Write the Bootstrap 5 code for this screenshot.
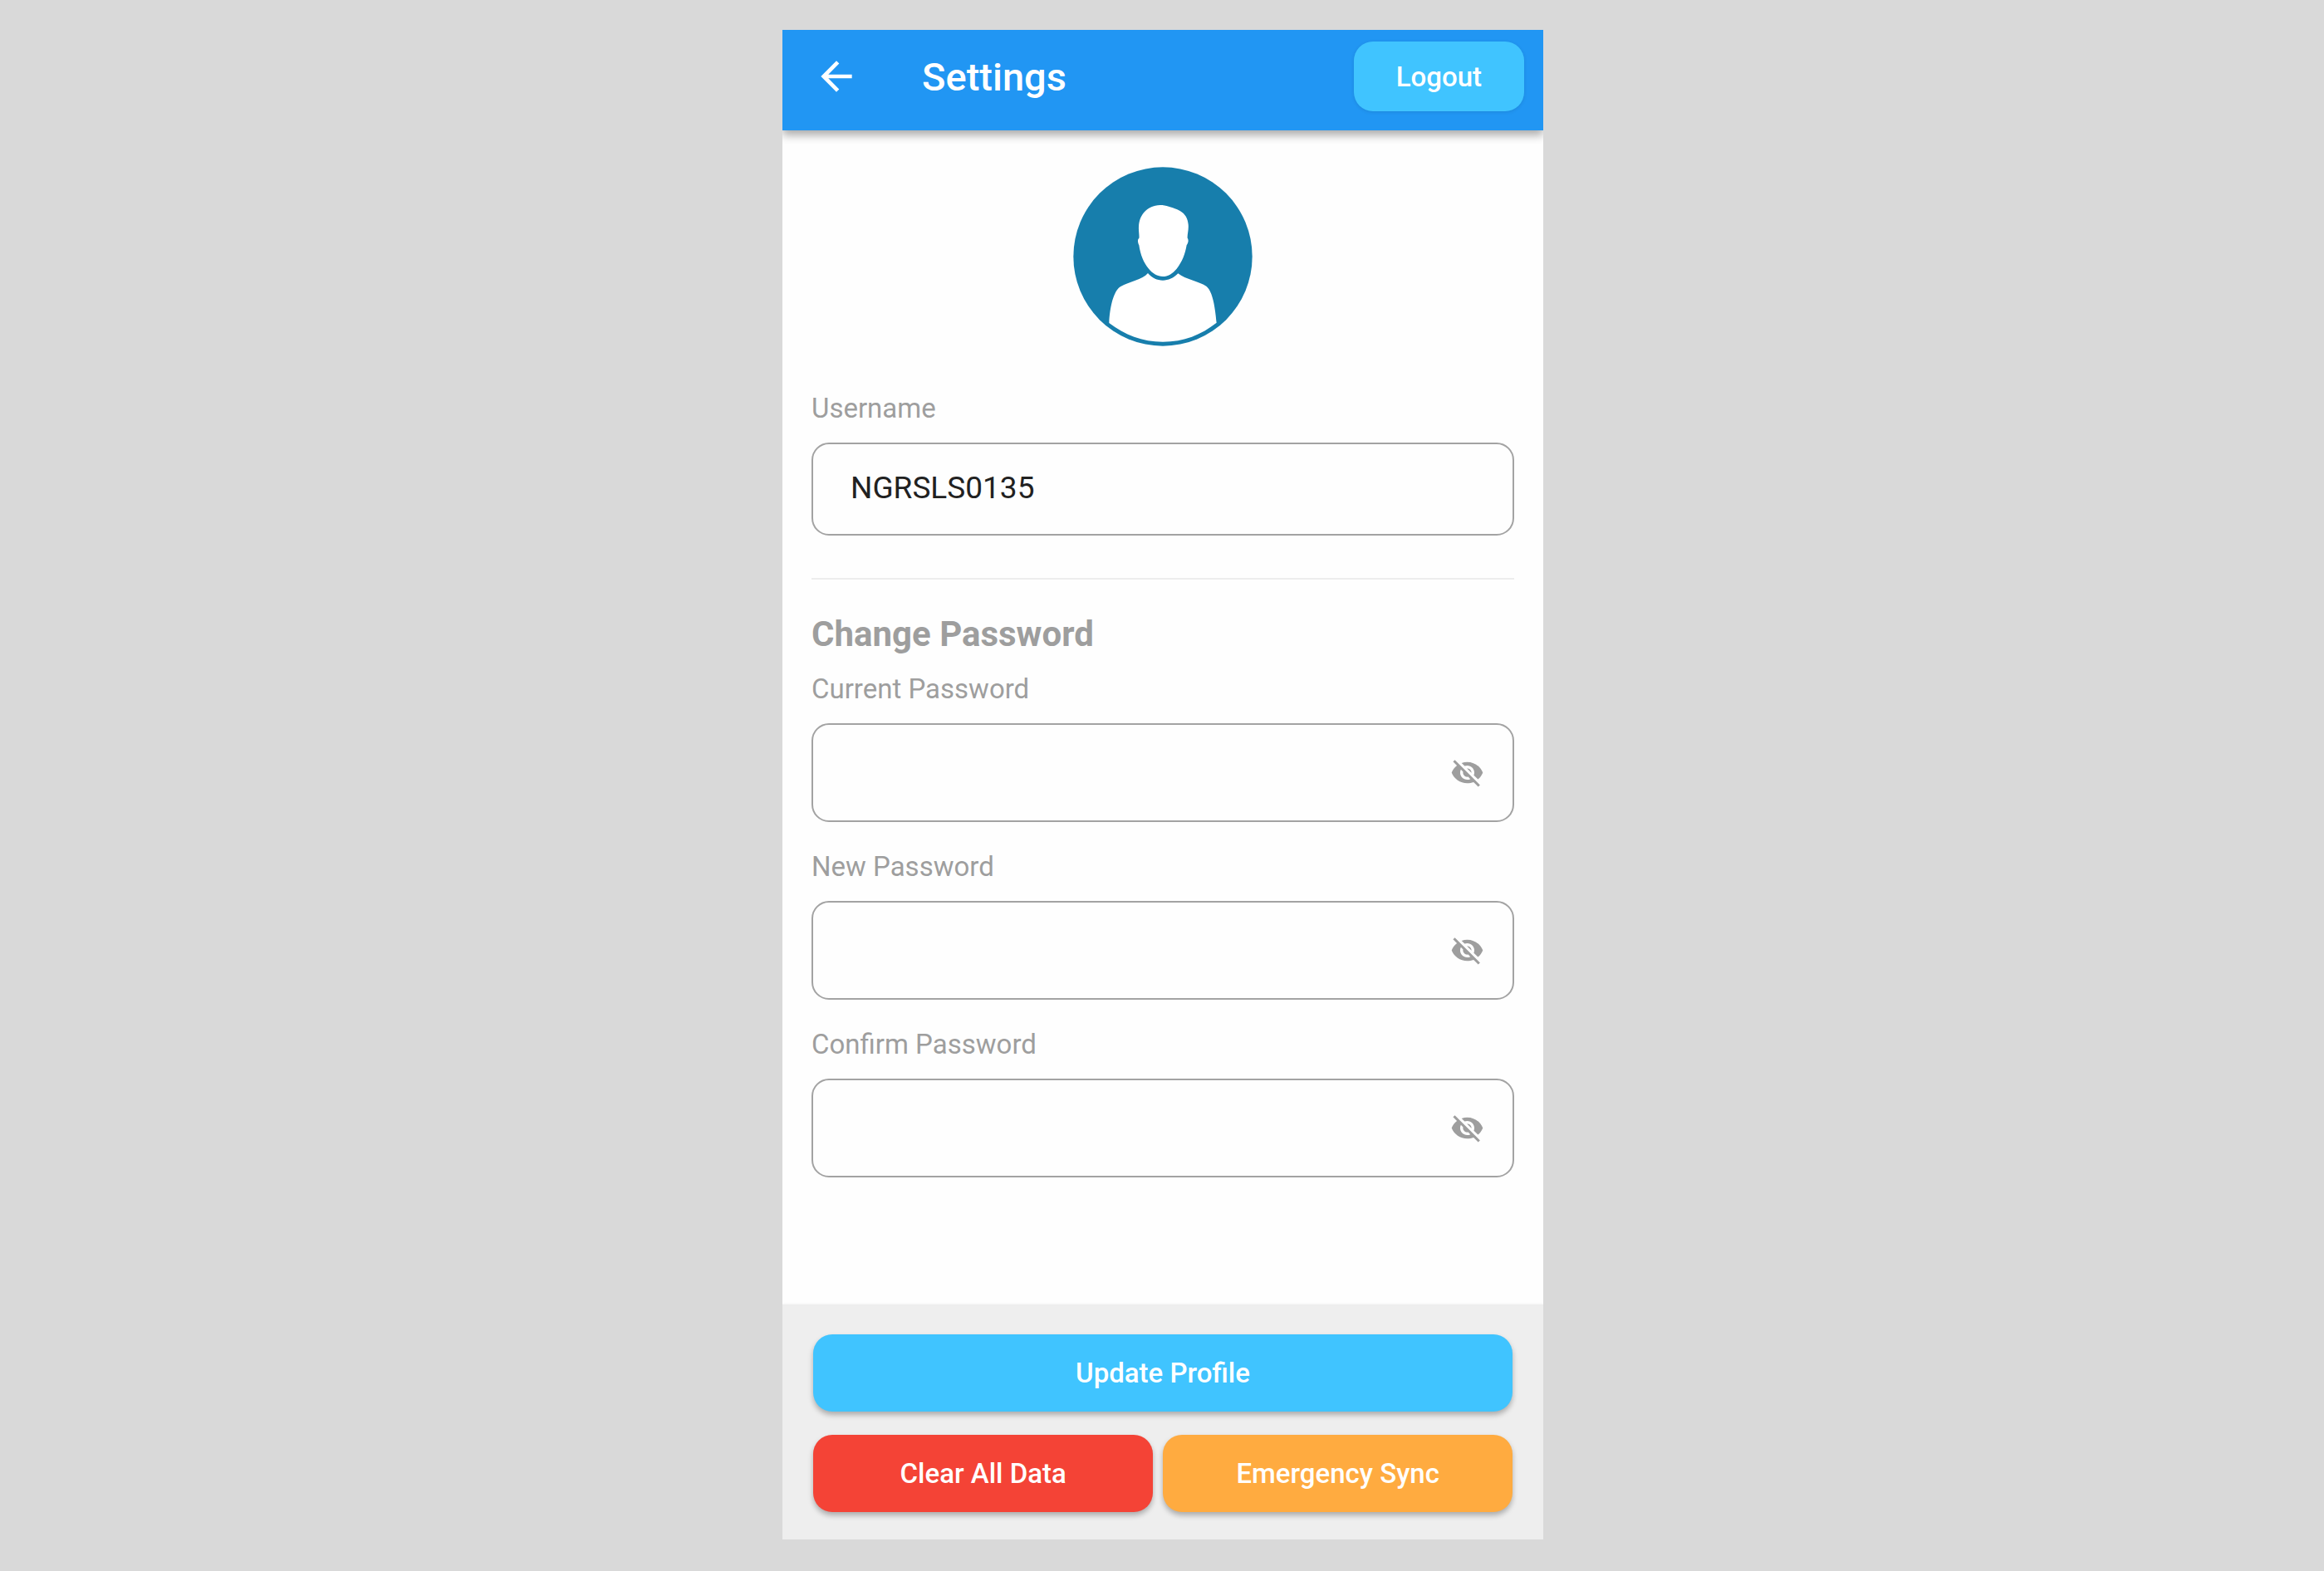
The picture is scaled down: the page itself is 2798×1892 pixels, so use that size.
<!DOCTYPE html>
<html lang="en">
<head>
<meta charset="utf-8">
<meta name="viewport" content="width=device-width, initial-scale=1">
<title>Settings</title>
<link href="https://cdn.jsdelivr.net/npm/bootstrap@5.3.0/dist/css/bootstrap.min.css" rel="stylesheet">
<style>
  body { background: #d9d9d9; font-family: Roboto, "Noto Sans", sans-serif; padding: 36px 36px 38px 38px; }
  .app-shell { width: 100%; max-width: 916px; background: #fefefe; }
  .app-header { background: #2196f3; padding: 14px 23px 23px 37px; box-shadow: 0 6px 10px rgba(0,0,0,.32); z-index: 1; }
  .app-title { font-size: 47px; line-height: 56px; font-weight: 500; margin-left: 75px; padding-top: 2px; }
  .icon-back { width: 56px; height: 56px; }
  .app-btn { --bs-btn-color: #fff; --bs-btn-hover-color: #fff; --bs-btn-active-color: #fff;
    border: 0; border-radius: 23px; font-size: 33px; line-height: 40px; font-weight: 500; }
  .btn-sky { background: #40c4ff; }
  .btn-clear { background: #f44336; flex: 34 1 0; }
  .btn-sync { background: #ffab40; flex: 35 1 0; }
  .btn-sky:hover { background: #2fb8f6; }
  .btn-clear:hover { background: #e53a2e; }
  .btn-sync:hover { background: #f79f2e; }
  .btn-logout { padding: 23px 51px 21px; box-shadow: 0 1px 4px rgba(0,0,0,.1); }
  .app-content { padding: 44px 35px; }
  .user-avatar { width: 216px; height: 216px; margin-bottom: 55px; }
  .field-label { font-size: 33px; line-height: 40px; color: #9e9e9e; margin-bottom: 21px; }
  .field-box { border: 2px solid #a3a3a3; border-radius: 21px; height: 119px; margin-bottom: 34px; }
  .field-box.user-box { height: 112px; margin-bottom: 51px; }
  .field-box:focus-within { border-color: #2196f3; }
  .field-box input { font-size: 37px; line-height: 44px; color: #212121; padding: 0 45px 4px; background: none; }
  .field-box input:focus { box-shadow: none; background: none; }
  .eye-toggle { color: #9e9e9e; margin-right: 34px; }
  .eye-toggle svg { width: 41px; height: 41px; }
  .section-rule { border-top: 2px solid #bbb; margin: 0 0 42px; }
  .section-title { font-size: 42px; line-height: 48px; font-weight: 700; color: #9e9e9e; margin-bottom: 22px; }
  .app-footer { background: #eee; padding: 36px 37px 33px; gap: 28px; box-shadow: 0 0 3px rgba(0,0,0,.08); }
  .app-footer .app-btn { padding: 27px 12px 26px; box-shadow: 0 4px 6px rgba(0,0,0,.28); }
  .action-row { gap: 12px; }
</style>
<script src="https://cdn.jsdelivr.net/npm/bootstrap@5.3.0/dist/js/bootstrap.bundle.min.js"></script>
</head>
<body class="min-vh-100 d-flex justify-content-center">
<svg class="d-none" aria-hidden="true">
  <symbol id="eye-off" viewBox="0 0 24 24"><path fill="currentColor" d="M12 7c2.760 0 5 2.240 5 5 0 .65-.13 1.260-.36 1.830l2.920 2.920c1.510-1.260 2.700-2.890 3.430-4.750-1.730-4.390-6-7.500-11-7.500-1.400 0-2.740.25-3.980.7l2.160 2.160C10.740 7.130 11.350 7 12 7zM2 4.270l2.280 2.280.46.46C3.080 8.300 1.780 10.020 1 12c1.730 4.390 6 7.500 11 7.500 1.550 0 3.030-.3 4.380-.84l.42.42L19.730 22 21 20.730 3.270 3 2 4.270zM7.530 9.800l1.550 1.550c-.05.21-.08.43-.08.65 0 1.660 1.340 3 3 3 .22 0 .44-.03.65-.08l1.550 1.550c-.67.33-1.410.53-2.200.53-2.760 0-5-2.240-5-5 0-.79.2-1.530.53-2.200zm4.310-.78l3.150 3.150.02-.16c0-1.660-1.340-3-3-3l-.17.01z"/></symbol>
</svg>
<div class="app-shell d-flex flex-column overflow-hidden">
  <header class="app-header d-flex align-items-center text-white position-relative">
    <button type="button" class="btn border-0 p-0 text-white d-flex" aria-label="Back">
      <svg class="icon-back" viewBox="0 0 24 24" fill="currentColor" aria-hidden="true"><path d="M20 11H7.830l5.590-5.590L12 4l-8 8 8 8 1.410-1.410L7.830 13H20v-2z"/></svg>
    </button>
    <h1 class="app-title mb-0">Settings</h1>
    <button type="button" class="btn app-btn btn-sky btn-logout ms-auto">Logout</button>
  </header>

  <main class="app-content flex-grow-1">
    <svg class="user-avatar d-block mx-auto" viewBox="64 62 648 648" role="img" aria-label="Profile picture">
      <circle cx="388" cy="386" r="323" fill="#177eac"/>
      <path fill="#fff" d="M378 200C335 201 302 233 301 278C300 296 304 309 302 320C296 323 297 334 302 345C307 380 319 408 336 429C351 448 369 458 388 458C406 458 423 448 438 430C458 405 469 376 474 345C480 336 482 325 477 319C476 305 482 289 480 270C478 245 466 227 440 216C418 208 401 200 378 200Z"/>
      <path fill="#fff" d="M334 446C315 469 265 478 236 494C210 509 196 570 194 626C250 669 314 694 388 694C464 694 527 668 582 625C577 573 569 514 546 494C520 476 470 469 443 447C426 464 408 472 388 472C367 472 349 463 334 446Z"/>
    </svg>

    <form id="profile-form">
      <label class="field-label d-block" for="username">Username</label>
      <div class="field-box user-box d-flex align-items-center">
        <input class="form-control border-0 h-100" type="text" id="username" value="NGRSLS0135" autocomplete="username">
      </div>

      <hr class="section-rule">

      <h2 class="section-title">Change Password</h2>
      <label class="field-label d-block" for="current-password">Current Password</label>
      <div class="field-box d-flex align-items-center">
        <input class="form-control border-0 h-100" type="password" id="current-password" autocomplete="current-password">
        <button type="button" class="eye-toggle btn border-0 p-0 d-flex" aria-label="Show current password"><svg aria-hidden="true"><use href="#eye-off"/></svg></button>
      </div>
      <label class="field-label d-block" for="new-password">New Password</label>
      <div class="field-box d-flex align-items-center">
        <input class="form-control border-0 h-100" type="password" id="new-password" autocomplete="new-password">
        <button type="button" class="eye-toggle btn border-0 p-0 d-flex" aria-label="Show new password"><svg aria-hidden="true"><use href="#eye-off"/></svg></button>
      </div>
      <label class="field-label d-block" for="confirm-password">Confirm Password</label>
      <div class="field-box d-flex align-items-center">
        <input class="form-control border-0 h-100" type="password" id="confirm-password" autocomplete="new-password">
        <button type="button" class="eye-toggle btn border-0 p-0 d-flex" aria-label="Show confirmed password"><svg aria-hidden="true"><use href="#eye-off"/></svg></button>
      </div>
    </form>
  </main>

  <footer class="app-footer d-flex flex-column">
    <button type="submit" form="profile-form" class="btn app-btn btn-sky w-100">Update Profile</button>
    <div class="action-row d-flex">
      <button type="button" class="btn app-btn btn-clear">Clear All Data</button>
      <button type="button" class="btn app-btn btn-sync">Emergency Sync</button>
    </div>
  </footer>
</div>
</body>
</html>
